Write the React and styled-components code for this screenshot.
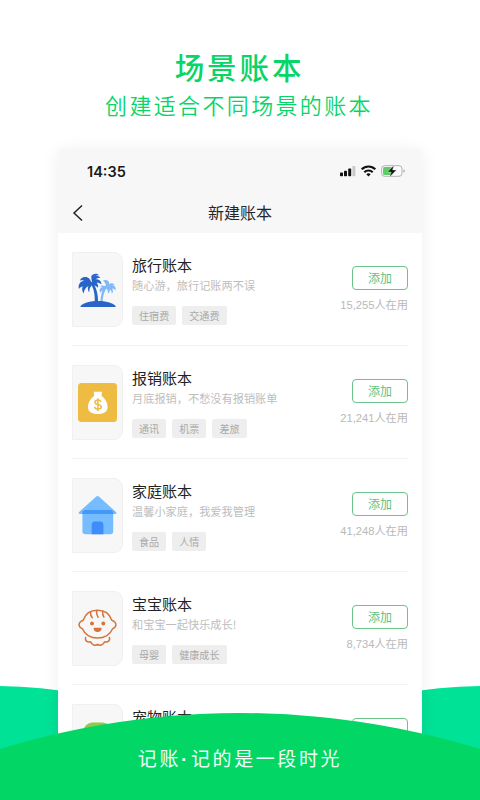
import React from "react"
import styled, { createGlobalStyle } from "styled-components"

const GlobalStyle = createGlobalStyle`
  * {
    box-sizing: border-box;
  }
  body {
    margin: 0;
    background: #fff;
    font-family: "Noto Sans CJK SC", sans-serif;
  }
`
const Container = styled.div`
  position: relative;
  width: 480px;
  height: 800px;
  overflow: hidden;
  display: flex;
  flex-direction: column;
  align-items: center;
  background: #fff;
`
const Title = styled.h1`
  margin: 46px 0 0;
  padding-right: 1px;
  height: 40px;
  line-height: 40px;
  font-size: 29.5px;
  font-weight: 500;
  letter-spacing: 2.9px;
  color: #07d568;
  white-space: nowrap;
`
const Subtitle = styled.p`
  margin: 2px 0 0;
  padding-right: 2px;
  height: 32px;
  line-height: 32px;
  font-size: 22px;
  font-weight: 350;
  letter-spacing: 2.35px;
  color: #07d568;
  white-space: nowrap;
`
const Hill = styled.div`
  position: absolute;
  top: 686px;
  left: ${(props) => props.$left}px;
  width: 940px;
  height: 940px;
  border-radius: 50%;
  background: #00e296;
`
const Phone = styled.div`
  position: relative;
  flex: none;
  margin-top: 29px;
  width: 364px;
  height: 651px;
  background: #fff;
  border-radius: 4px 4px 0 0;
  box-shadow: 0 2px 18px rgba(0, 0, 0, 0.07);
`
const Header = styled.div`
  height: 84px;
  background: #f7f7f7;
  border-radius: 4px 4px 0 0;
`
const StatusBar = styled.div`
  display: flex;
  justify-content: space-between;
  align-items: center;
  height: 44px;
  padding: 0 15px 0 29px;
`
const Time = styled.div`
  font-family: Inter, sans-serif;
  font-size: 14.5px;
  font-weight: 600;
  color: #1a1a1a;
`
const NavBar = styled.div`
  display: grid;
  grid-template-columns: 40px 1fr 40px;
  align-items: center;
  height: 40px;
`
const Back = styled.div`
  display: flex;
  padding-left: 14px;
`
const NavTitle = styled.div`
  padding-bottom: 2px;
  text-align: center;
  font-size: 16px;
  line-height: 24px;
  color: #262626;
`
const List = styled.div`
  padding: 0 14px;
`
const Row = styled.div`
  display: flex;
  height: 113px;
  padding-top: 19px;
  border-bottom: 1px solid #f3f3f3;
`
const Cover = styled.div`
  flex: none;
  display: flex;
  align-items: center;
  justify-content: center;
  width: 51px;
  height: 75px;
  background: #f7f7f7;
  border: 1px solid #f0f0f0;
  border-radius: 0 9px 9px 0;
`
const Info = styled.div`
  flex: 1;
  padding-left: 9px;
  white-space: nowrap;
`
const Name = styled.div`
  margin-top: 2px;
  font-size: 15px;
  line-height: 22px;
  color: #222;
`
const Desc = styled.div`
  margin-top: -1px;
  font-size: 11.2px;
  line-height: 20px;
  color: #bdbdbd;
`
const Tags = styled.div`
  display: flex;
  gap: 6px;
  margin-top: 11px;
`
const Tag = styled.span`
  height: 19px;
  padding: 0 7px;
  line-height: 19px;
  font-size: 10.1px;
  color: #a9a9a9;
  background: #eeeeee;
  border-radius: 2px;
`
const Action = styled.div`
  display: flex;
  flex-direction: column;
  align-items: flex-end;
  padding-top: 14px;
`
const AddButton = styled.button`
  width: 56px;
  height: 24px;
  padding: 0;
  font-family: inherit;
  font-size: 12px;
  line-height: 20px;
  color: #5fbf82;
  background: #fff;
  border: 1.5px solid #6cc48c;
  border-radius: 4px;
`
const Count = styled.div`
  margin-top: 6px;
  font-family: "Liberation Sans", "Noto Sans CJK SC", sans-serif;
  font-size: 11.2px;
  line-height: 18px;
  color: #b9b9b9;
  white-space: nowrap;
`
const Footer = styled.div`
  position: absolute;
  top: 713px;
  left: -578px;
  width: 1636px;
  height: 1636px;
  border-radius: 50%;
  display: flex;
  justify-content: center;
  padding-top: 30px;
  background: #02d664;
`
const Slogan = styled.div`
  font-size: 19px;
  line-height: 30px;
  letter-spacing: 2.6px;
  color: #f0fff8;
  white-space: nowrap;
`
const Dot = styled.span`
  margin-right: 1px;
  font-family: "Liberation Sans", sans-serif;
  font-weight: 700;
`

const StatusIcons = () => (
  <svg width="67" height="16" viewBox="0 0 67 16">
    <g fill="#111">
      <rect x="0" y="9.6" width="3" height="3.6" rx="0.7" />
      <rect x="4" y="7.8" width="3" height="5.4" rx="0.7" />
      <rect x="8.200" y="5.4" width="3" height="7.8" rx="0.7" />
      <rect x="12.400" y="3" width="3" height="10.200" rx="0.7" fill="#c9c9c9" />
    </g>
    <g fill="none" stroke="#111" strokeWidth="2.200">
      <path d="M21.7 6.3a9.6 9.6 0 0 1 13.6 0" />
      <path d="M24.3 9.2a6 6 0 0 1 8.4 0" />
    </g>
    <path d="M26.3 11.2a3.2 3.2 0 0 1 4.4 0L28.5 13.500z" fill="#111" />
    <rect x="41.6" y="2.700" width="20.4" height="10.6" rx="3" fill="#fafafa" stroke="#b3b3b3" />
    <path d="M63.4 6.3q1.6.5 1.6 1.7t-1.6 1.7z" fill="#b3b3b3" />
    <rect x="43" y="4" width="9.5" height="8" rx="1.6" fill="#5fce68" />
    <path d="M54 2.200 47.500 9h3.700l-1.600 5.100 6.900-7.200h-3.900z" fill="#111" stroke="#f7f7f7" strokeWidth="0.4" />
  </svg>
)

const PalmIcon = () => (
  <svg width="39" height="39" viewBox="0 0 39 39">
    <g fill="#7fb9f7">
      <path d="M26.800 15.800c1.600 0 2.400.6 2.100 1.800-2.800 4-4.100 9-4.500 15.400h-2.100c.2-6.600 1.400-12.400 4.500-17.200z" />
      <path d="M28 17.500c-1.500-2.500-4.500-2.800-6-.8 1 0 1.800-.1 2.500.2-2.500.6-3.500 3.100-2.500 5.700 1-1.500 2.800-1.800 4.200-3.100.4-.6.900-1.200 1.500-1.200 1.900.8 2.500 2.800 2.100 5.200 1.800-.8 2.300-2.600 1.900-3.900 1.500.9 2.200 2.300 2 4.100 1.800-1.700 1.500-4 .3-5.300 1.700 0 2.900.8 3.600 2.100.6-3-1.100-5-3.600-5.400.8-.3 1.600-.3 2.400 0-1-1.900-3.500-2.400-5.300-.9.200-1.200 0-2-.7-2.900-1.500-1.600-4.100-1.500-5.600-.2 2 .6 3.500 3.400 3.200 6.400z" />
    </g>
    <g fill="#2865c9">
      <path d="M14.200 11.500c3.900 5.300 6.100 12.700 5.900 21h-3.400c.5-7.700-.9-14.500-4.500-19.800z" />
      <path d="M13.300 12.600C12.500 8.800 9.900 6.300 6.200 7 4 7.400 2.500 8.700 1.900 10.700c1.500-.5 3-.4 4.200 0C2 11.200-.2 14.900.9 18.900c1-1.500 2.400-2.200 3.900-2.500-1.100 2-.9 4.700.9 7 .3-3.500 2-5.900 4.800-7.500-1.100 2.200-.8 4.700.8 6.700-.2-3.200.6-5.700 2.900-7.600 2.300.1 4.100.9 5.700 2.700.6-2.100-.2-3.700-1.300-4.900 1.800-.2 3.500.4 4.900 1.500-.2-3.100-2.600-5.100-5.900-5 1.100-1 2.700-1.500 4.700-1.300-2.200-2.900-5.300-2.900-7.700-.4 1-1.700 3.300-2.700 6.800-2.300-2.500-2.500-5.900-2-8 .6-.1 1.200-.2 3.100.9 6.700z" />
      <path d="M2.500 36C6 32.600 12 31 20 31s14.200 1.600 17.600 5q.5.900-.7.900H3.200q-1.200 0-.7-.9z" />
    </g>
  </svg>
)

const MoneyIcon = () => (
  <svg width="39" height="39" viewBox="0 0 39 39">
    <rect x="0" y="0" width="39" height="39" rx="3.500" fill="#eebc43" />
    <path d="M15.700 8.700h8.300l-.5 4.300c4 2.800 6.300 7.200 6 11.400-.3 4.300-3.200 6.500-9.600 6.500s-9.700-2.200-9.900-6.500c-.2-4.200 2.200-8.600 6.200-11.400z" fill="#fff" />
    <g fill="none" stroke="#eebc43" strokeWidth="1.500">
      <path d="M22.900 18.800c-.5-1.300-1.500-1.700-3-1.700-1.700 0-2.900.8-2.900 2.200 0 3.300 6.300 1.500 6.300 4.500 0 1.500-1.300 2.300-3.200 2.300-2 0-3.200-.8-3.500-2.300" />
      <path d="M19.900 15.200v13" />
    </g>
  </svg>
)

const HouseIcon = () => (
  <svg width="39" height="39" viewBox="0 0 39 39">
    <path d="M18.300.6q1.300-1 2.600 0L38 16q1.200 1.300-.4 2H1.500q-1.600-.7-.4-2z" fill="#76bdff" />
    <path d="M4.400 14h30.800v21.200q0 3-3 3H7.400q-3 0-3-3z" fill="#76bdff" />
    <path d="M6.400 14h26.800l2 1.500V18H4.400v-2.500z" fill="#4498fb" />
    <path d="M13.700 38.200V29q0-3.400 3.400-3.400H22q3.400 0 3.400 3.400v9.200z" fill="#3f8cfb" />
  </svg>
)

const BabyIcon = () => (
  <svg width="39" height="39" viewBox="0 0 39 39" fill="none" stroke="#d5733b" strokeWidth="1.500" strokeLinecap="round" strokeLinejoin="round">
    <path d="M5.200 11.200C7.300 5 12.600 1.300 19.500 1.300s12.200 3.700 14.300 9.900c3.200 1.200 4.400 3.300 4 5.300-.4 1.800-1.500 2.800-3.200 3.200C31.800 26 26.500 29 19.500 29S7.200 26 4.400 19.700c-1.700-.4-2.800-1.400-3.200-3.200-.4-2 .8-4.100 4-5.300z" />
    <path d="M12.500 3c-.1 2.400.5 4.300 1.800 5.700M18.600 1.500c-.3 2.600.3 5 1.500 6.800M24.700 2.500c-.3 2 .2 4 1.200 5.600" />
    <circle cx="14" cy="14.500" r="1.200" fill="#d5733b" />
    <circle cx="25.300" cy="14.500" r="1.200" fill="#d5733b" />
    <path d="M16.300 19.500h6.600c-.2 1.800-1.500 2.800-3.300 2.800s-3.100-1-3.300-2.800z" fill="#d5733b" />
    <path d="M7.600 28.500c-.8 3.200 1.600 5.200 5 4.300 1.300 3.300 4.700 4.400 7 2.500 2.300 1.900 5.700.8 7-2.500 3.400.9 5.700-1.100 4.900-4.300" />
  </svg>
)

const PetIcon = () => (
  <svg width="39" height="39" viewBox="0 0 39 39">
    <path d="M5 39V10Q6 1.500 14 .5h11q8 1 9 9.500v29z" fill="#8fca4d" />
  </svg>
)

const books = [
  { name: "旅行账本", desc: "随心游，旅行记账两不误", tags: ["住宿费", "交通费"], count: "15,255", icon: <PalmIcon /> },
  { name: "报销账本", desc: "月底报销，不愁没有报销账单", tags: ["通讯", "机票", "差旅"], count: "21,241", icon: <MoneyIcon /> },
  { name: "家庭账本", desc: "温馨小家庭，我爱我管理", tags: ["食品", "人情"], count: "41,248", icon: <HouseIcon /> },
  { name: "宝宝账本", desc: "和宝宝一起快乐成长!", tags: ["母婴", "健康成长"], count: "8,734", icon: <BabyIcon /> },
  { name: "宠物账本", icon: <PetIcon /> },
]

function Book({ book }) {
  return (
    <Row>
      <Cover>{book.icon}</Cover>
      <Info>
        <Name>{book.name}</Name>
        {book.desc && <Desc>{book.desc}</Desc>}
        {book.tags && (
          <Tags>
            {book.tags.map((tag) => (
              <Tag key={tag}>{tag}</Tag>
            ))}
          </Tags>
        )}
      </Info>
      <Action>
        <AddButton>{book.count && "添加"}</AddButton>
        {book.count && <Count>{book.count}人在用</Count>}
      </Action>
    </Row>
  )
}

function App() {
  return (
    <Container>
      <GlobalStyle />
      <Title>场景账本</Title>
      <Subtitle>创建适合不同场景的账本</Subtitle>
      <Hill $left={-475} />
      <Hill $left={15} />
      <Phone>
        <Header>
          <StatusBar>
            <Time>14:35</Time>
            <StatusIcons />
          </StatusBar>
          <NavBar>
            <Back>
              <svg width="12" height="18" viewBox="0 0 12 18" fill="none" stroke="#222" strokeWidth="1.500">
                <path d="M10 1.500 2 9l8 7.500" />
              </svg>
            </Back>
            <NavTitle>新建账本</NavTitle>
          </NavBar>
        </Header>
        <List>
          {books.map((book) => (
            <Book key={book.name} book={book} />
          ))}
        </List>
      </Phone>
      <Footer>
        <Slogan>
          记账<Dot>·</Dot>记的是一段时光
        </Slogan>
      </Footer>
    </Container>
  )
}

export default App
